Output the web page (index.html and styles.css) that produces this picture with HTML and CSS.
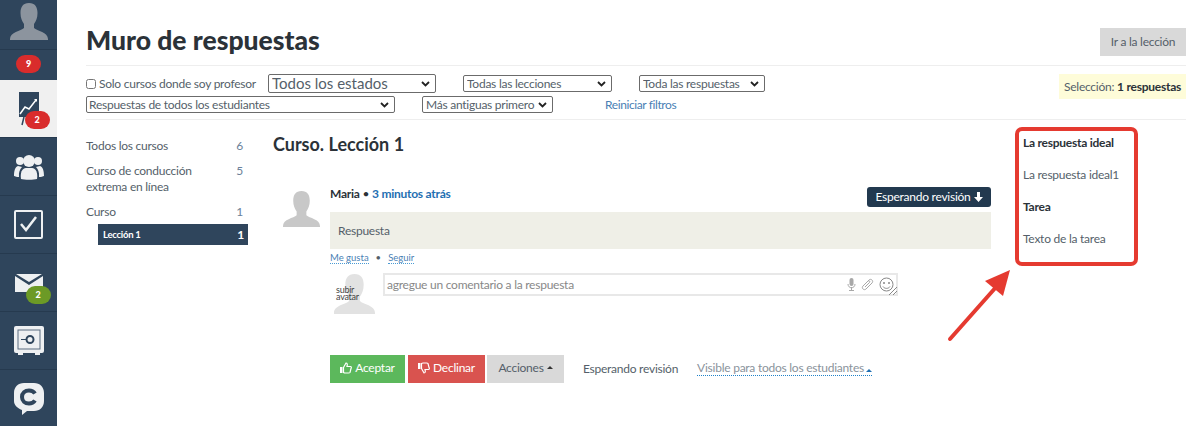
FILE: index.html
```html
<!DOCTYPE html>
<html lang="es">
<head>
<meta charset="utf-8">
<title>Muro de respuestas</title>
<link rel="stylesheet" href="styles.css">
</head>
<body>
<aside class="sidebar">
  <div class="side-avatar">
    <svg width="38" height="37" viewBox="0 0 38 37"><path fill="#8c949e" d="M19 0c6 0 8.500 4 8.500 10 0 5-1.500 8-3.500 11v4c3 3 14 4 14 11v1H0v-1c0-7 11-8 14-11v-4c-2-3-3.500-6-3.500-11C10.500 4 13 0 19 0z"/></svg>
  </div>
  <div class="side-count"><span class="badge badge-red">9</span></div>
  <div class="side-item active">
    <span class="icon-wrap">
      <svg width="22" height="34" viewBox="0 0 22 34"><rect x="1" y="0" width="20" height="25" fill="#2f455c"/><path d="M2 22l5-7 4 2 7-9" fill="none" stroke="#fff" stroke-width="1.500"/><path d="M16 7l3 0 0 3z" fill="#fff"/><path d="M6 25l-2 8M10 25v8" stroke="#2f455c" stroke-width="1.500"/></svg>
      <span class="badge badge-red badge-chart">2</span>
    </span>
  </div>
  <div class="side-item">
    <svg width="30" height="26" viewBox="0 0 30 26"><g fill="#eef0f2"><circle cx="15" cy="7" r="6"/><circle cx="6" cy="7" r="4"/><circle cx="24" cy="7" r="4"/><path d="M7 25c-1-6 1-11 5-11h6c4 0 6 5 5 11-3 1-13 1-16 0z"/><path d="M5 23c-2 0-4-.5-5-1 0-5 1-9 4-10l4 1c-2 2-3.500 5-3 10zM25 23c2 0 4-.5 5-1 0-5-1-9-4-10l-4 1c2 2 3.500 5 3 10z"/></g></svg>
  </div>
  <div class="side-item">
    <svg width="29" height="29" viewBox="0 0 29 29"><rect x="1" y="1" width="27" height="27" rx="1" fill="none" stroke="#eef0f2" stroke-width="2"/><path d="M7 14l5 6L22 7" fill="none" stroke="#eef0f2" stroke-width="2.500"/></svg>
  </div>
  <div class="side-item">
    <span class="icon-wrap">
      <svg width="28" height="18" viewBox="0 0 28 18"><path fill="#eef0f2" d="M1 0h26L14 8zM0 2l14 9 14-9v16H0z"/></svg>
      <span class="badge badge-green badge-mail">2</span>
    </span>
  </div>
  <div class="side-item">
    <svg width="30" height="29" viewBox="0 0 30 29"><rect x="0" y="0" width="30" height="27" rx="2" fill="#eef0f2"/><rect x="4" y="4" width="22" height="19" fill="none" stroke="#5b6d80"/><circle cx="16" cy="13.500" r="3.500" fill="none" stroke="#2f455c" stroke-width="2"/><path d="M7 13.500h5" stroke="#2f455c"/><path d="M4 27h5v2H4zM21 27h5v2h-5z" fill="#eef0f2"/></svg>
  </div>
  <div class="side-item">
    <svg width="30" height="32" viewBox="0 0 30 32"><path fill="#eef0f2" d="M10 0h10c6 0 10 4 10 10v8c0 6-4 10-10 10h-7l-5 4v-5C3 25 0 22 0 18v-8C0 4 4 0 10 0z"/><path fill="none" stroke="#2f455c" stroke-width="4" d="M21 10.500c-1-1.500-3.500-3-6-3-4 0-7 2.500-7 6.500s3 6.500 7 6.500c2.500 0 5-1.500 6-3"/></svg>
  </div>
</aside>
<main class="main">
  <header class="page-head">
    <h1 class="title">Muro de respuestas</h1>
    <a class="btn btn-grey btn-lesson">Ir a la lección</a>
  </header>
  <section class="filters">
    <div class="filter-rows">
      <div class="filter-row">
        <label class="check"><input type="checkbox" class="checkbox">Solo cursos donde soy profesor</label>
        <select class="sel sel-states"><option>Todos los estados</option></select>
        <select class="sel sel-lessons"><option>Todas las lecciones</option></select>
        <select class="sel sel-answers"><option>Toda las respuestas</option></select>
      </div>
      <div class="filter-row">
        <select class="sel sel-students"><option>Respuestas de todos los estudiantes</option></select>
        <select class="sel sel-order"><option>Más antiguas primero</option></select>
        <a class="reset">Reiniciar filtros</a>
      </div>
    </div>
    <div class="selection">Selección: <b>1 respuestas</b></div>
  </section>
  <section class="content">
    <nav class="course-nav">
      <div class="nav-row"><span>Todos los cursos</span><span class="num">6</span></div>
      <div class="nav-row"><span class="nav-wrap">Curso de conducción extrema en línea</span><span class="num">5</span></div>
      <div class="nav-row"><span>Curso</span><span class="num">1</span></div>
      <div class="nav-active"><span>Lección 1</span><span class="num-active">1</span></div>
    </nav>
    <article class="answer">
      <h2 class="lesson">Curso. Lección 1</h2>
      <div class="answer-body">
        <svg class="avatar" width="37" height="36" viewBox="0 0 38 37"><path fill="#c8c8c8" d="M19 0c6 0 8.500 4 8.500 10 0 5-1.500 8-3.500 11v4c3 3 14 4 14 11v1H0v-1c0-7 11-8 14-11v-4c-2-3-3.500-6-3.500-11C10.500 4 13 0 19 0z"/></svg>
        <div class="answer-main">
          <div class="answer-top">
            <div class="author"><b>Maria</b> • <a class="time">3 minutos atrás</a></div>
            <a class="status">Esperando revisión
              <svg width="9" height="10" viewBox="0 0 9 10"><path fill="#fff" d="M3 0h3v5h3L4.500 10 0 5h3z"/></svg>
            </a>
          </div>
          <div class="answer-text">Respuesta</div>
          <div class="social"><a class="dotted">Me gusta</a><span class="dot">•</span><a class="dotted">Seguir</a></div>
          <div class="comment">
            <div class="comment-avatar">
              <svg width="41" height="40" viewBox="0 0 38 37"><path fill="#e2e2e2" d="M19 0c6 0 8.500 4 8.500 10 0 5-1.500 8-3.500 11v4c3 3 14 4 14 11v1H0v-1c0-7 11-8 14-11v-4c-2-3-3.500-6-3.500-11C10.500 4 13 0 19 0z"/></svg>
              <a class="upload">subir avatar</a>
            </div>
            <div class="comment-box">
              <span class="placeholder">agregue un comentario a la respuesta</span>
              <span class="comment-icons">
                <svg width="9" height="13" viewBox="0 0 9 13"><rect x="2.500" y="0" width="4" height="8" rx="2" fill="#a8a8a8"/><path d="M1 6c0 5 7 5 7 0M4.500 9v3M2 12.500h5" fill="none" stroke="#a8a8a8"/></svg>
                <svg width="13" height="13" viewBox="0 0 13 13"><path d="M2 8l6-6c2-2 5 1 3 3l-6 6c-2 2-5-1-3-3l5-5c1-1 2.500.5 1.500 1.500L4 9" fill="none" stroke="#a8a8a8"/></svg>
                <svg width="15" height="15" viewBox="0 0 15 15"><circle cx="7.500" cy="7.500" r="6.500" fill="none" stroke="#888"/><circle cx="5" cy="6" r="1" fill="#888"/><circle cx="10" cy="6" r="1" fill="#888"/><path d="M4 9.500c1.500 2.500 5.500 2.500 7 0" fill="none" stroke="#888"/></svg>
              </span>
              <svg class="grip" width="8" height="8" viewBox="0 0 8 8"><path d="M0 8l8-8M4 8l4-4" stroke="#888"/></svg>
            </div>
          </div>
          <div class="actions">
            <a class="btn btn-green">
              <svg width="12" height="12" viewBox="0 0 12 12"><path fill="none" stroke="#fff" stroke-width="1.200" d="M3.500 5.500L6 1c1.500 0 1.500 1.500 1 3.500h3.500c1 0 1 1.500.500 2L10 10.500c-.3.500-1 .5-1.500.5H5c-.7 0-1.500-.5-1.500-.5z"/><rect x="0" y="5" width="2.500" height="6" fill="#fff"/></svg>
              Aceptar</a>
            <a class="btn btn-red">
              <svg width="12" height="12" viewBox="0 0 12 12"><path fill="none" stroke="#fff" stroke-width="1.200" d="M3.500 6.500L6 11c1.500 0 1.500-1.500 1-3.500h3.500c1 0 1-1.500.500-2L10 1.500C9.700 1 9 1 8.500 1H5c-.7 0-1.500.5-1.500.5z"/><rect x="0" y="1" width="2.500" height="6" fill="#fff"/></svg>
              Declinar</a>
            <a class="btn btn-grey btn-actions">Acciones <i class="caret"></i></a>
            <span class="state">Esperando revisión</span>
            <a class="visible">Visible para todos los estudiantes<i class="caret caret-blue"></i></a>
          </div>
        </div>
      </div>
    </article>
    <aside class="ideal">
      <h3 class="ideal-h">La respuesta ideal</h3>
      <p class="ideal-p">La respuesta ideal1</p>
      <h3 class="ideal-h">Tarea</h3>
      <p class="ideal-p">Texto de la tarea</p>
    </aside>
  </section>
</main>
<div class="callout"></div>
<svg class="arrow" width="66" height="76" viewBox="0 0 66 76"><path d="M3 73L50 20" stroke="#e53a30" stroke-width="4" stroke-linecap="round"/><path fill="#e53a30" d="M63 4L38 15l18 15z"/></svg>
</body>
</html>
```

FILE: styles.css
```css
* { box-sizing: border-box; }
html, body { margin: 0; height: 426px; overflow: hidden; }
body {
  display: flex;
  background: #fff;
  color: #555f6a;
  font-family: Lato, "Liberation Sans", sans-serif;
  font-size: 12px;
  letter-spacing: -.25px;
  position: relative;
}
.sidebar { width: 57px; flex: none; background: #2f455c; height: 426px; }
.side-avatar { height: 50px; display: flex; justify-content: center; padding-top: 3px; overflow: hidden; border-bottom: 1px solid #263a4f; }
.side-count { height: 30px; display: flex; justify-content: center; padding-top: 5px; }
.side-item { height: 58px; display: flex; align-items: center; justify-content: center; border-top: 1px solid #263a4f; }
.side-item.active { background: #f0f0f0; height: 57px; border-top: 0; }
.icon-wrap { position: relative; display: flex; }
.badge { display: block; width: 25px; height: 18px; line-height: 18px; border-radius: 9px; color: #fff; font-size: 9px; font-weight: 900; text-align: center; }
.badge-red { background: #d92c2c; }
.badge-green { background: #6c9a26; }
.badge-chart { position: absolute; left: 7px; bottom: -3px; }
.badge-mail { position: absolute; left: 11px; bottom: -12px; }

.main { flex: 1; padding: 0 14px 0 29px; min-width: 0; }
.page-head { height: 66px; display: flex; justify-content: space-between; border-bottom: 1px solid #eee; padding-top: 28px; }
.title { margin: -3px 0 0; font-size: 26.500px; letter-spacing: 0; line-height: 30px; font-weight: 900; color: #2b3238; }
.btn { display: inline-flex; align-items: center; justify-content: center; gap: 3px; font-size: 12px; height: 28px; }
.btn-grey { background: #d9d9d9; color: #555f6a; }
.btn-lesson { width: 86px; padding-bottom: 2px; }

.filters { height: 54px; display: flex; justify-content: space-between; border-bottom: 1px solid #eee; padding-top: 8px; }
.filter-rows { display: flex; flex-direction: column; gap: 3px; }
.filter-row { display: flex; align-items: center; height: 19px; }
.filter-row + .filter-row { height: 17px; }
.check { display: flex; align-items: center; width: 182px; white-space: nowrap; }
.checkbox { margin: 0 3px 0 0; width: 10px; height: 10px; }
.sel {
  appearance: none;
  height: 17px;
  font-family: inherit;
  font-size: 12px;
  line-height: 15px;
  letter-spacing: -.25px;
  color: #555f6a;
  background: #fff url("data:image/svg+xml,%3Csvg xmlns='http://www.w3.org/2000/svg' width='9' height='6' viewBox='0 0 9 6'%3E%3Cpath d='M1 1l3.500 3.500L8 1' fill='none' stroke='%23222' stroke-width='1.800'/%3E%3C/svg%3E") no-repeat right 5px center;
  border: 1px solid #6b6b6b;
  border-radius: 2px;
  padding: 0 16px 0 3px;
}
.sel-states { width: 168px; height: 19px; font-size: 15px; line-height: 17px; letter-spacing: 0; margin-right: 27px; }
.sel-lessons { width: 149px; margin-right: 27px; }
.sel-answers { width: 126px; }
.sel-students { width: 309px; margin-right: 27px; padding-left: 2px; }
.sel-order { width: 131px; margin-right: 52px; }
.reset { color: #4a7fb5; letter-spacing: -.4px; }
.selection { background: #fefcd9; width: 127px; height: 25px; line-height: 25px; padding: 0 0 0 5px; white-space: nowrap; }
.selection b { color: #2b3238; }

.content { display: flex; padding-top: 18px; }
.course-nav { width: 162px; flex: none; }
.nav-row { display: flex; justify-content: space-between; line-height: 16px; margin-bottom: 9px; padding-right: 5px; }
.nav-wrap { width: 115px; }
.num { color: #6a8199; }
.nav-active { margin: -5px 0 0 12px; height: 21px; background: #2f455c; color: #fff; display: flex; align-items: center; justify-content: space-between; padding: 0 4px 0 5px; font-size: 9.500px; font-weight: 700; }
.num-active { font-size: 12px; }

.answer { width: 718px; margin-left: 25px; flex: none; }
.lesson { margin: -3px 0 0; color: #2b3238; font-size: 18px; line-height: 18px; font-weight: 700; letter-spacing: 0; }
.answer-body { display: flex; margin-top: 29px; position: relative; }
.avatar { margin: 9px 0 0 10px; flex: none; }
.answer-main { margin-left: 10px; width: 661px; }
.answer-top { display: flex; justify-content: space-between; height: 25px; margin-top: 5px; }
.author { line-height: 14px; color: #2b3238; padding-top: 0; }
.time { color: #1f6fb2; font-weight: 700; }
.status { width: 124px; height: 20px; padding-bottom: 1px; border-radius: 3px; background: #22394f; color: #fff; display: flex; align-items: center; justify-content: center; gap: 3px; white-space: nowrap; }
.answer-text { height: 37px; line-height: 38px; background: #efefe7; padding-left: 8px; }
.social { display: flex; gap: 7px; font-size: 9.500px; letter-spacing: 0; margin-top: 3px; height: 14px; align-items: flex-start; }
.dotted { color: #4a7fb5; border-bottom: 1px dotted #4a9bd4; line-height: 11px; }
.dot { line-height: 11px; }
.comment { display: flex; margin-top: 7px; }
.comment-avatar { position: relative; width: 53px; flex: none; padding: 1px 0 0 4px; height: 41px; }
.upload { position: absolute; left: 6px; top: 13px; width: 24px; font-size: 9px; line-height: 7px; color: #444; }
.comment-box { width: 515px; height: 23px; padding-bottom: 1px; border: 2px solid #e8e8e8; position: relative; padding-left: 2px; display: flex; align-items: center; justify-content: space-between; font-size: 12px; color: #888; }
.comment-icons { display: flex; align-items: center; gap: 5px; padding-right: 2px; }
.grip { position: absolute; right: -1px; bottom: -1px; }
.actions { display: flex; align-items: center; margin-top: 41px; }
.actions .btn { height: 28px; color: #fff; padding-bottom: 3px; }
.btn-green { width: 75px; background: #5cb85c; }
.btn-red { width: 77px; margin: 0 2px 0 3px; background: #d9534f; }
.actions .btn-actions { width: 77px; background: #d9d9d9; color: #555f6a; }
.caret { display: inline-block; width: 0; height: 0; border: 3px solid transparent; border-top: 0; border-bottom: 3px solid #333; }
.caret-blue { border-bottom-color: #1f6fb2; margin-left: 2px; }
.state { margin: -2px 0 0 19px; }
.visible { margin: -2px 0 0 19px; color: #8a939c; border-bottom: 1px dotted #1f82c8; line-height: 14px; white-space: nowrap; }

.ideal { margin-left: 32px; flex: none; margin-top: -3px; }
.ideal-h { margin: 0 0 16px; font-size: 12px; line-height: 16px; color: #2b3238; font-weight: 700; white-space: nowrap; }
.ideal-p { margin: 0 0 16px; line-height: 16px; white-space: nowrap; }

.callout { position: absolute; left: 1015px; top: 127px; width: 123px; height: 139px; border: 4px solid #e53a30; border-radius: 7px; }
.arrow { position: absolute; left: 947px; top: 266px; }
```
